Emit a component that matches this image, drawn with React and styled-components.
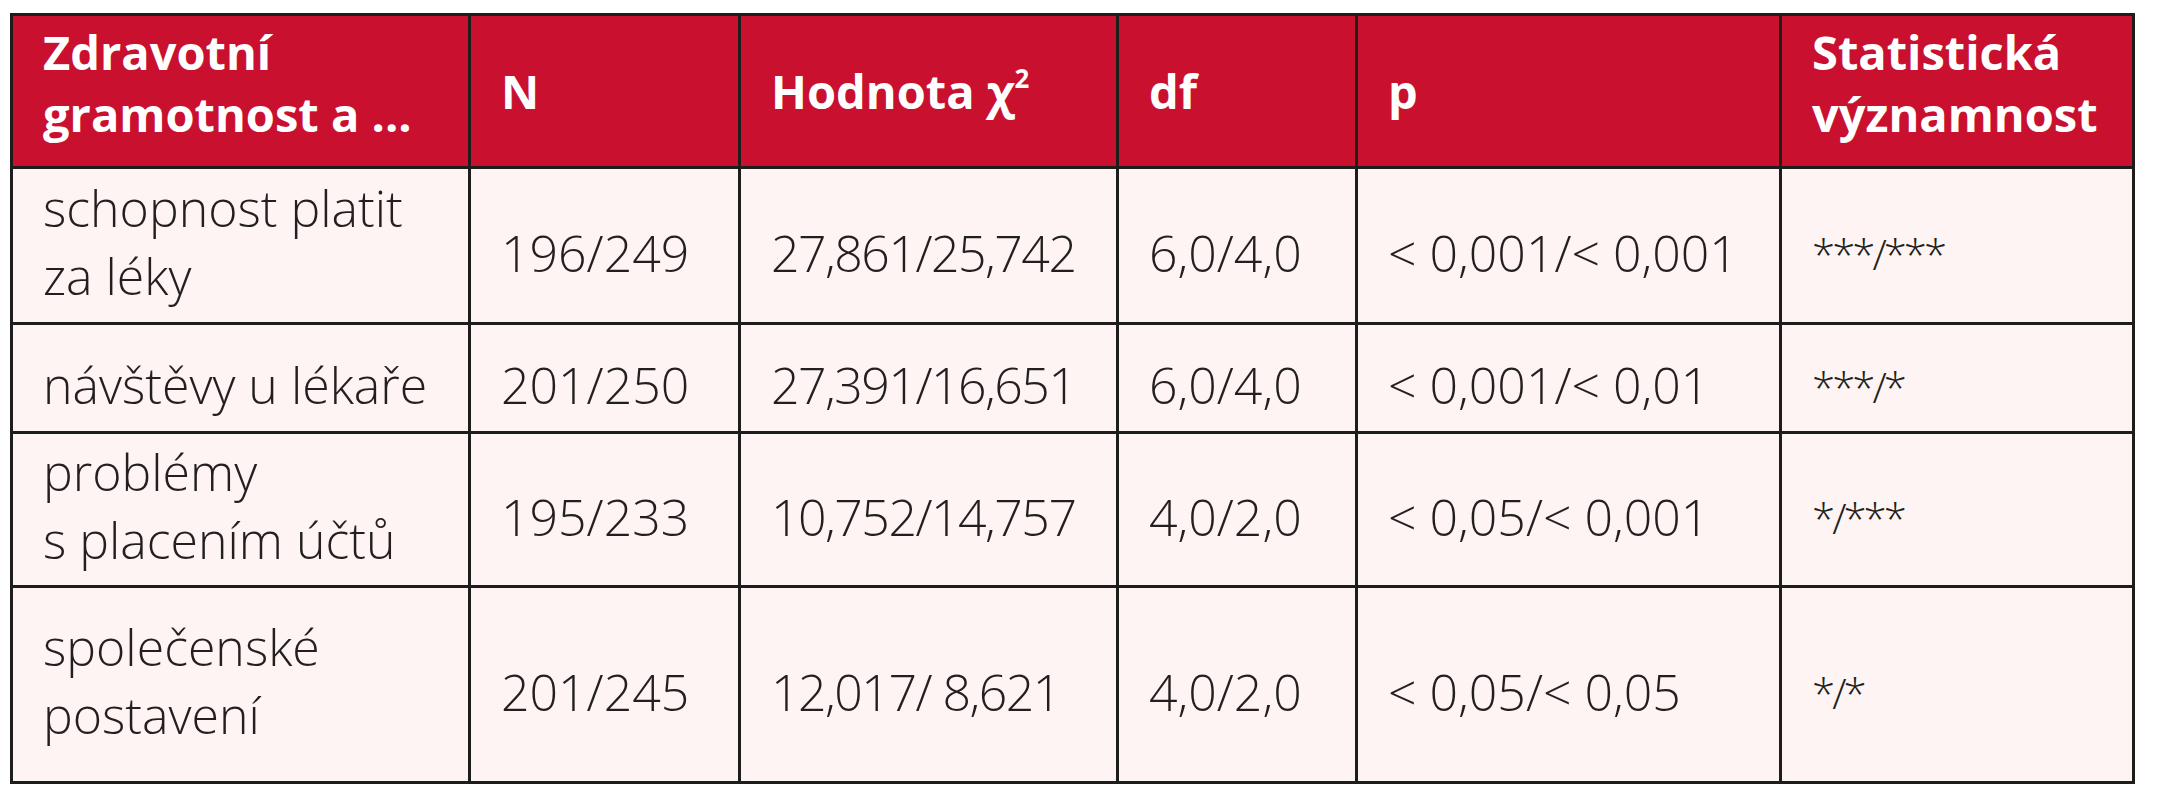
import React from 'react'
import styled, { createGlobalStyle } from 'styled-components'

const GlobalStyle = createGlobalStyle`
  html, body {
    margin: 0;
    padding: 0;
    background: #ffffff;
  }
`

const Page = styled.div`
  padding: 13px 0 0 10px;
  height: 800px;
  box-sizing: border-box;
  background: #ffffff;
`

const Table = styled.table`
  border-collapse: separate;
  border-spacing: 0;
  table-layout: fixed;
  width: 2125px;
  border-top: 3px solid #1d1d1b;
  border-left: 3px solid #1d1d1b;
  font-family: 'Open Sans', 'Liberation Sans', sans-serif;
`

const HeadCell = styled.th`
  box-sizing: border-box;
  width: ${(p) => p.$w}px;
  height: 153px;
  padding: 0 10px ${(p) => (p.$multi ? 16 : 0)}px 30px;
  background: #c9102f;
  color: #ffffff;
  font-weight: 700;
  font-size: 47px;
  line-height: 62px;
  text-align: left;
  vertical-align: middle;
  border-right: 3px solid #1d1d1b;
  border-bottom: 3px solid #1d1d1b;

  sup {
    font-size: 0.55em;
    line-height: 0;
    vertical-align: 0.8em;
  }
`

const Row = styled.tr`
  height: ${(p) => p.$h}px;
`

const Cell = styled.td`
  box-sizing: border-box;
  padding: ${(p) => (p.$multi ? '0 8px 8px 30px' : '14px 8px 0 30px')};
  background: #fdf4f3;
  color: #231f20;
  font-weight: 300;
  font-size: 50px;
  line-height: 68px;
  letter-spacing: ${(p) => (p.$tight ? '-1.5px' : '0')};
  text-align: left;
  vertical-align: middle;
  white-space: nowrap;
  border-right: 3px solid #1d1d1b;
  border-bottom: 3px solid #1d1d1b;
`

const Stars = styled.span`
  font-size: 42px;
  letter-spacing: -3px;
`

const columns = [
  { w: 458, label: ['Zdravotní', 'gramotnost a ...'] },
  { w: 270, label: ['N'] },
  { w: 378, label: null },
  { w: 239, label: ['df'] },
  { w: 424, label: ['p'] },
  { w: 353, label: ['Statistická', 'významnost'] },
]

const rows = [
  { h: 156, name: ['schopnost platit', 'za léky'], n: '196/249', chi: '27,861/25,742', df: '6,0/4,0', p: '< 0,001/< 0,001', sig: '***/***' },
  { h: 109, name: ['návštěvy u lékaře'], n: '201/250', chi: '27,391/16,651', df: '6,0/4,0', p: '< 0,001/< 0,01', sig: '***/*' },
  { h: 154, name: ['problémy', 's placením účtů'], n: '195/233', chi: '10,752/14,757', df: '4,0/2,0', p: '< 0,05/< 0,001', sig: '*/***' },
  { h: 196, name: ['společenské', 'postavení'], n: '201/245', chi: '12,017/ 8,621', df: '4,0/2,0', p: '< 0,05/< 0,05', sig: '*/*' },
]

function Lines({ parts }) {
  return parts.map((t, i) => (
    <React.Fragment key={i}>
      {i > 0 && <br />}
      {t}
    </React.Fragment>
  ))
}

export default function App() {
  return (
    <>
      <GlobalStyle />
      <Page>
        <Table>
          <thead>
            <tr>
              {columns.map((c, i) => (
                <HeadCell key={i} $w={c.w} $multi={c.label && c.label.length > 1}>
                  {c.label ? (
                    <Lines parts={c.label} />
                  ) : (
                    <>
                      Hodnota χ<sup>2</sup>
                    </>
                  )}
                </HeadCell>
              ))}
            </tr>
          </thead>
          <tbody>
            {rows.map((r, i) => (
              <Row key={i} $h={r.h}>
                <Cell $multi={r.name.length > 1}>
                  <Lines parts={r.name} />
                </Cell>
                <Cell>{r.n}</Cell>
                <Cell $tight>{r.chi}</Cell>
                <Cell>{r.df}</Cell>
                <Cell>{r.p}</Cell>
                <Cell>
                  <Stars>{r.sig}</Stars>
                </Cell>
              </Row>
            ))}
          </tbody>
        </Table>
      </Page>
    </>
  )
}
